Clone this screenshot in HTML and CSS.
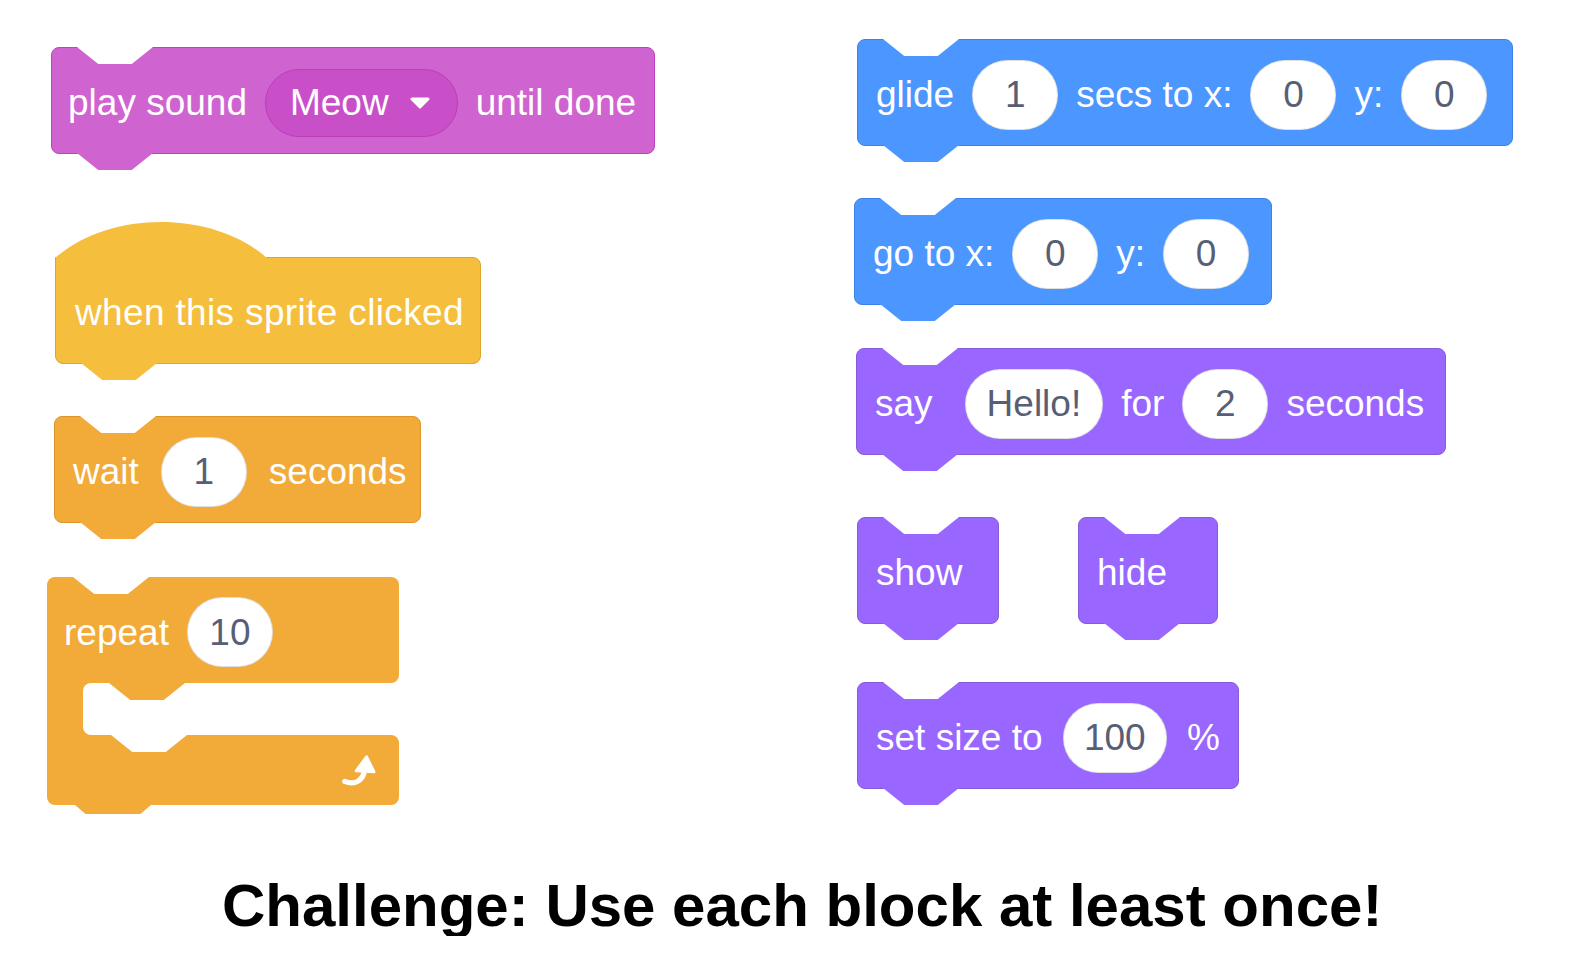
FILE: index.html
```html
<!DOCTYPE html>
<html lang="en">
<head>
<meta charset="utf-8">
<title>Scratch blocks challenge</title>
<link rel="stylesheet" href="styles.css">
</head>
<body>
<div class="board">
  <div class="col col-left">
    <div class="blk sound b-play">
      <span>play sound</span>
      <span class="dd">Meow <svg class="dd-arrow" viewBox="0 0 22 12" width="22" height="12"><path d="M3 2 H19 L11 10 Z" fill="#fff" stroke="#fff" stroke-width="3" stroke-linejoin="round"/></svg></span>
      <span>until done</span>
    </div>
    <div class="blk events hat b-hat">
      <span>when this sprite clicked</span>
    </div>
    <div class="blk control b-wait">
      <span>wait</span>
      <span class="pill">1</span>
      <span>seconds</span>
    </div>
    <div class="cblock control b-repeat">
      <div class="blk c-top">
        <span>repeat</span>
        <span class="pill">10</span>
      </div>
      <div class="c-mouth"><div class="c-slot"></div></div>
      <div class="c-bot">
        <svg class="loop-icon" viewBox="0 0 40 38" width="38" height="36">
          <path d="M6 31 C 16 35, 26 31, 27 18" fill="none" stroke="#fff" stroke-width="5.5" stroke-linecap="round"/>
          <path d="M18 20 L29 5 L37 21 Z" fill="#fff" stroke="#fff" stroke-width="3" stroke-linejoin="round"/>
        </svg>
      </div>
    </div>
  </div>
  <div class="col col-right">
    <div class="blk motion b-glide">
      <span>glide</span>
      <span class="pill">1</span>
      <span>secs to x:</span>
      <span class="pill">0</span>
      <span>y:</span>
      <span class="pill">0</span>
    </div>
    <div class="blk motion b-goto">
      <span>go to x:</span>
      <span class="pill">0</span>
      <span>y:</span>
      <span class="pill">0</span>
    </div>
    <div class="blk looks b-say">
      <span>say</span>
      <span class="pill pill-say">Hello!</span>
      <span>for</span>
      <span class="pill">2</span>
      <span>seconds</span>
    </div>
    <div class="pair">
      <div class="blk looks b-show"><span>show</span></div>
      <div class="blk looks b-hide"><span>hide</span></div>
    </div>
    <div class="blk looks b-size">
      <span>set size to</span>
      <span class="pill">100</span>
      <span>%</span>
    </div>
  </div>
</div>
<p class="caption">Challenge: Use each block at least once!</p>
</body>
</html>
```
FILE: styles.css
```css
html, body {
  margin: 0;
  padding: 0;
  background: #fff;
}
body {
  font-family: "Liberation Sans", Arial, sans-serif;
}

.board {
  display: flex;
  align-items: flex-start;
}
.col {
  display: flex;
  flex-direction: column;
  align-items: flex-start;
}
.col-left { width: 800px; }

/* categories */
.sound   { --c: #cf63cf; --b: #bd42bd; }
.events  { --c: #f5be3c; --b: #dfa62c; }
.control { --c: #f2aa39; --b: #dc952a; }
.motion  { --c: #4c97ff; --b: #3d82e6; }
.looks   { --c: #9966ff; --b: #855cd6; }

/* generic stack block */
.blk {
  position: relative;
  display: flex;
  align-items: center;
  gap: 18px;
  box-sizing: border-box;
  height: 107px;
  padding: 4px 18px 0;
  border-radius: 8px;
  background: var(--c);
  border: 1px solid var(--b);
  color: #fff;
  font-size: 37px;
  line-height: 1;
  white-space: nowrap;
}
.blk::before {
  content: "";
  position: absolute;
  top: -1px;
  left: 25px;
  width: 76px;
  height: 17px;
  background: #fff;
  clip-path: polygon(0 0, 100% 0, 72% 100%, 28% 100%);
}
.blk::after {
  content: "";
  position: absolute;
  top: 100%;
  left: 25px;
  width: 76px;
  height: 17px;
  background: var(--c);
  clip-path: polygon(0 0, 100% 0, 72% 100%, 28% 100%);
}

/* hat block */
.hat {
  border-top-left-radius: 0;
  letter-spacing: 0.35px;
}
.hat::before {
  top: auto;
  bottom: 100%;
  left: -1px;
  width: 212px;
  height: 37px;
  background: var(--c);
  clip-path: path('M0 37 C 55 -11 157 -11 212 37 Z');
}

/* inputs */
.pill {
  display: flex;
  align-items: center;
  justify-content: center;
  box-sizing: border-box;
  min-width: 86px;
  height: 70px;
  padding: 0 21px;
  border-radius: 35px;
  background: #fff;
  border: 1px solid rgba(0, 0, 0, 0.12);
  color: #575e75;
}
.pill-say { margin-left: 14px; }

.dd {
  display: flex;
  align-items: center;
  gap: 20px;
  box-sizing: border-box;
  height: 68px;
  padding: 0 26px 0 24px;
  border-radius: 34px;
  background: #c94fc9;
  border: 1px solid #b83fb8;
  color: #fff;
}
.dd-arrow { display: block; }

/* C block */
.cblock {
  display: flex;
  flex-direction: column;
  width: 352px;
}
.c-top {
  width: 100%;
  height: 106px;
  border: none;
  border-radius: 8px 8px 8px 0;
  padding-left: 17px;
}
.c-top::before { top: 0; left: 26px; }
.c-top::after { left: 62px; }
.c-mouth {
  display: flex;
  height: 52px;
  background: linear-gradient(to right, var(--c) 44px, transparent 44px);
}
.c-slot {
  flex: 1;
  margin-left: 36px;
  background: #fff;
  border-radius: 8px 0 0 8px;
}
.c-bot {
  position: relative;
  display: flex;
  align-items: center;
  justify-content: flex-end;
  height: 70px;
  padding-right: 22px;
  background: var(--c);
  border-radius: 0 8px 8px 8px;
}
.c-bot::before {
  content: "";
  position: absolute;
  top: 0;
  left: 64px;
  width: 76px;
  height: 17px;
  background: #fff;
  clip-path: polygon(0 0, 100% 0, 72% 100%, 28% 100%);
}
.c-bot::after {
  content: "";
  position: absolute;
  top: 100%;
  left: 28px;
  width: 76px;
  height: 9px;
  background: var(--c);
  clip-path: polygon(0 0, 100% 0, 86% 100%, 14% 100%);
}
.loop-icon { display: block; }

/* placement (left column) */
.b-play   { width: 604px; margin: 47px 0 0 51px; padding-left: 16px; }
.b-hat    { width: 426px; margin: 103px 0 0 55px; padding-left: 19px; }
.b-wait   { width: 367px; margin: 52px 0 0 54px; gap: 22px; }
.b-repeat { margin: 54px 0 0 47px; }

/* placement (right column) */
.b-glide { width: 656px; margin: 39px 0 0 57px; }
.b-goto  { width: 418px; margin: 52px 0 0 54px; }
.b-say   { width: 590px; margin: 43px 0 0 56px; }
.pair {
  display: flex;
  gap: 79px;
  margin: 62px 0 0 57px;
}
.b-show  { width: 142px; }
.b-hide  { width: 140px; }
.b-size  { width: 382px; margin: 58px 0 0 57px; gap: 20px; }

/* caption */
.caption {
  margin: 71px 0 0 222px;
  font-size: 60px;
  line-height: 60px;
  font-weight: 700;
  color: #000;
  white-space: nowrap;
}
```
